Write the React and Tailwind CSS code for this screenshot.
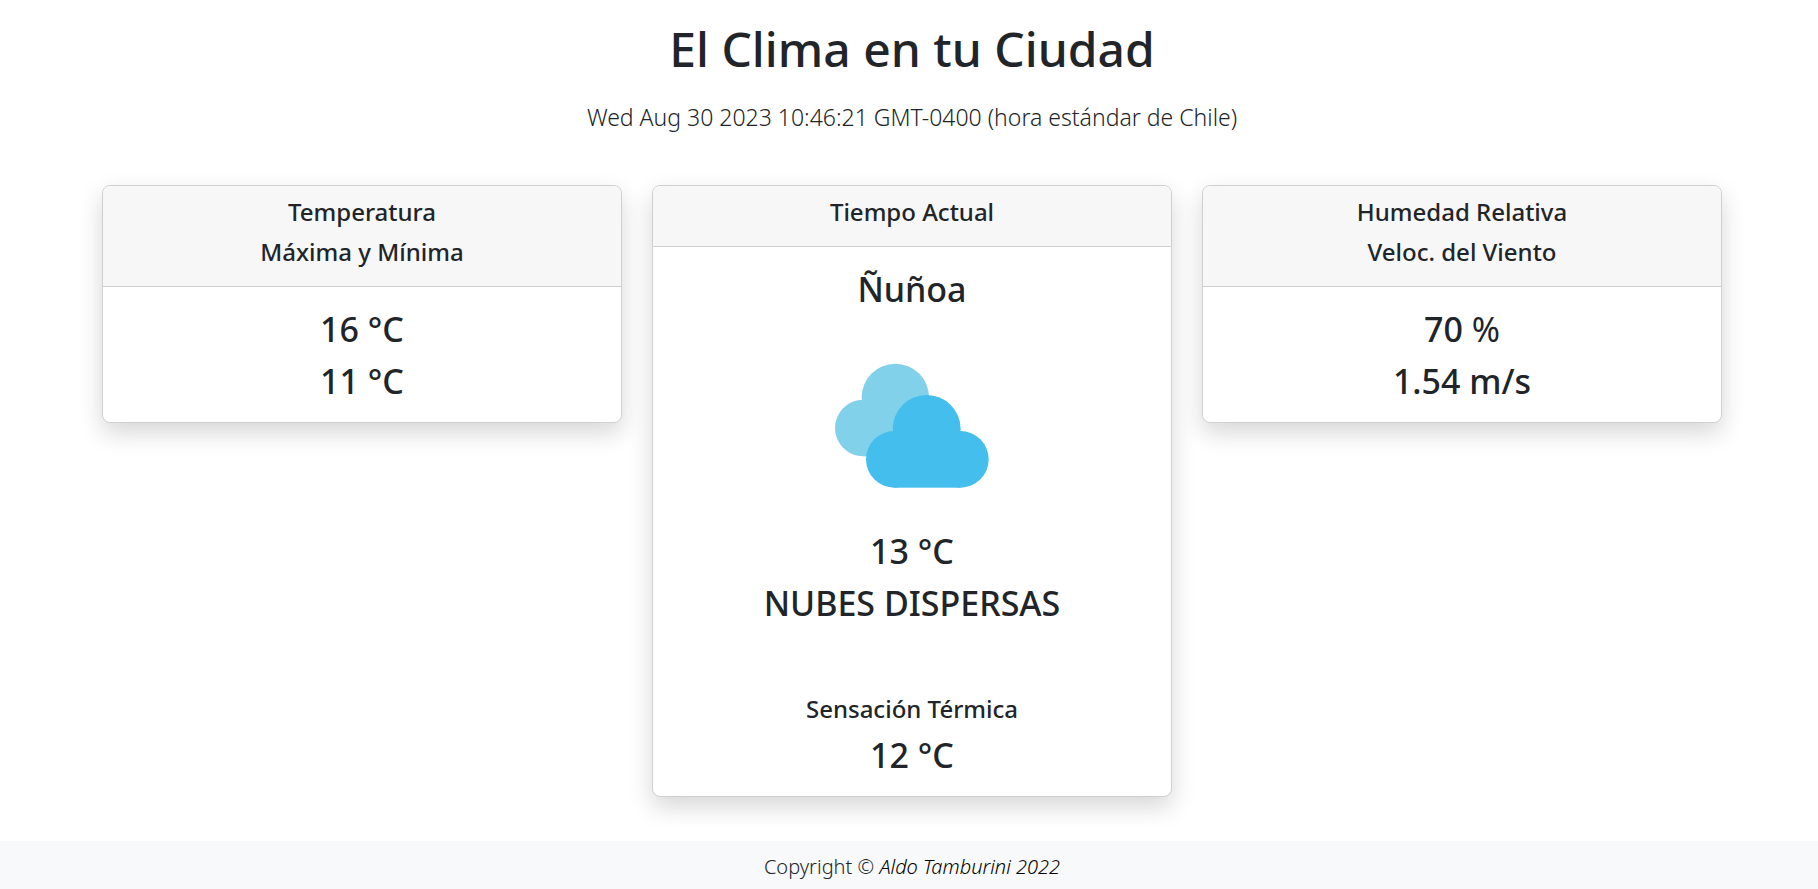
function Card({ heading, children }) {
  return (
    <section className="overflow-hidden rounded-lg border border-[#cfcfcf] bg-white text-center shadow-[0_10px_24px_rgba(0,0,0,0.16)]">
      <header className="flex flex-col gap-2.5 border-b border-[#cfcfcf] bg-[#f7f7f7] px-5 pt-[11px] pb-[19px]">
        {heading.map((line) => (
          <h2 key={line} className="text-2xl leading-[30px] font-medium">{line}</h2>
        ))}
      </header>
      <div className="flex flex-col gap-2.5 px-5 pt-[21px] pb-5">{children}</div>
    </section>
  );
}

function Value({ children }) {
  return <p className="text-[34px] leading-[42px] font-medium">{children}</p>;
}

function Clouds() {
  return (
    <svg viewBox="36 -63 600 600" className="mx-auto size-[200px]" role="img" aria-label="Nubes dispersas">
      <g fill="#82d1eb">
        <circle cx="286" cy="169" r="101" />
        <circle cx="190" cy="261" r="85" />
        <rect x="190" y="176" width="110" height="170" />
      </g>
      <g fill="#43beed">
        <circle cx="380" cy="264" r="102" />
        <circle cx="283" cy="355" r="85" />
        <circle cx="481" cy="355" r="85" />
        <rect x="283" y="270" width="198" height="170" />
      </g>
    </svg>
  );
}

export default function App() {
  return (
    <div className="flex min-h-screen flex-col bg-white pl-1.5 font-['Noto_Sans','Open_Sans',sans-serif] text-[#212529]">
      <header className="pt-[19px] text-center">
        <h1 className="text-5xl leading-[60px] font-medium">El Clima en tu Ciudad</h1>
        <p className="mt-5 text-[23px] leading-9 font-light">
          Wed Aug 30 2023 10:46:21 GMT-0400 (hora estándar de Chile)
        </p>
      </header>
      <main className="mx-auto mt-[50px] grid w-full max-w-[1650px] grow grid-cols-3 items-start gap-[30px] px-[15px]">
        <Card heading={["Temperatura", "Máxima y Mínima"]}>
          <Value>16 °C</Value>
          <Value>11 °C</Value>
        </Card>
        <Card heading={["Tiempo Actual"]}>
          <Value>Ñuñoa</Value>
          <Clouds />
          <Value>13 °C</Value>
          <Value>NUBES DISPERSAS</Value>
          <h3 className="mt-[60px] text-2xl leading-[30px] font-medium">Sensación Térmica</h3>
          <Value>12 °C</Value>
        </Card>
        <Card heading={["Humedad Relativa", "Veloc. del Viento"]}>
          <Value>
            70 <span className="font-normal">%</span>
          </Value>
          <Value>1.54 m/s</Value>
        </Card>
      </main>
      <footer className="-ml-1.5 bg-[#f8f9fa] pt-2.5 pb-1.5 pl-1.5 text-center text-xl leading-8 font-light">
        Copyright © <em className="text-black">Aldo Tamburini 2022</em>
      </footer>
    </div>
  );
}
